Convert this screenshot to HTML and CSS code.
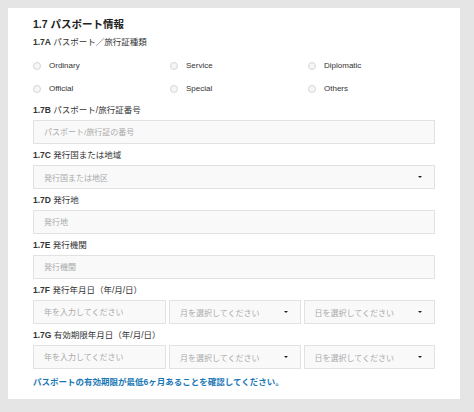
FILE: index.html
```html
<!DOCTYPE html>
<html lang="ja">
<head>
<meta charset="utf-8">
<title>1.7 パスポート情報</title>
<link rel="stylesheet" href="styles.css">
</head>
<body>
<section class="card">
  <h2 class="title">1.7 パスポート情報</h2>
  <div class="label"><b>1.7A</b> パスポート／旅行証種類</div>
  <div class="radios">
    <label class="radio"><span class="dot"></span>Ordinary</label>
    <label class="radio"><span class="dot"></span>Service</label>
    <label class="radio"><span class="dot"></span>Diplomatic</label>
    <label class="radio"><span class="dot"></span>Official</label>
    <label class="radio"><span class="dot"></span>Special</label>
    <label class="radio"><span class="dot"></span>Others</label>
  </div>

  <div class="group first">
    <div class="label"><b>1.7B</b> パスポート/旅行証番号</div>
    <input class="control" type="text" placeholder="パスポート/旅行証の番号">
  </div>

  <div class="group">
    <div class="label"><b>1.7C</b> 発行国または地域</div>
    <div class="control select"><span>発行国または地区</span><span class="caret"></span></div>
  </div>

  <div class="group">
    <div class="label"><b>1.7D</b> 発行地</div>
    <input class="control" type="text" placeholder="発行地">
  </div>

  <div class="group">
    <div class="label"><b>1.7E</b> 発行機関</div>
    <input class="control" type="text" placeholder="発行機関">
  </div>

  <div class="group">
    <div class="label"><b>1.7F</b> 発行年月日（年/月/日）</div>
    <div class="date-row">
      <input class="control" type="text" placeholder="年を入力してください">
      <div class="control select"><span>月を選択してください</span><span class="caret"></span></div>
      <div class="control select"><span>日を選択してください</span><span class="caret"></span></div>
    </div>
  </div>

  <div class="group last">
    <div class="label"><b>1.7G</b> 有効期限年月日（年/月/日）</div>
    <div class="date-row">
      <input class="control" type="text" placeholder="年を入力してください">
      <div class="control select"><span>月を選択してください</span><span class="caret"></span></div>
      <div class="control select"><span>日を選択してください</span><span class="caret"></span></div>
    </div>
  </div>

  <p class="note">パスポートの有効期限が最低6ヶ月あることを確認してください。</p>
</section>
</body>
</html>
```

FILE: styles.css
```css
html, body {
  margin: 0;
  padding: 0;
  background: #e5e5e5;
}
body {
  padding: 8px;
  font-family: "Liberation Sans", "Noto Sans CJK JP", sans-serif;
  color: #333;
}
.card {
  width: 452px;
  box-sizing: border-box;
  background: #fff;
  padding: 8px 25px 10px 25px;
}
.title {
  margin: 0;
  font-size: 10.5px;
  line-height: 16px;
  font-weight: bold;
  color: #222;
}
.label {
  font-size: 8.5px;
  line-height: 14px;
  margin-top: 3px;
  color: #333;
}
.label b {
  font-weight: bold;
}
.radios {
  display: grid;
  grid-template-columns: 137px 138px 1fr;
  margin-top: 5px;
}
.radio {
  display: flex;
  align-items: center;
  height: 23px;
  font-size: 8px;
  color: #333;
}
.dot {
  width: 8px;
  height: 8px;
  border: 1px solid #d6d6d6;
  border-radius: 50%;
  background: #f6f6f6;
  margin-right: 8px;
  box-sizing: border-box;
}
.group {
  margin-bottom: 4px;
}
.group.first {
  margin-top: 3px;
}
.group.last {
  margin-top: 2px;
}
.group .label {
  margin-top: 0;
  margin-bottom: 3px;
}
.control {
  display: flex;
  align-items: center;
  width: 100%;
  height: 24px;
  box-sizing: border-box;
  border: 1px solid #e2e2e2;
  background: #f9f9f9;
  padding: 0 12px 0 10px;
  font-family: "Liberation Sans", "Noto Sans CJK JP", sans-serif;
  font-size: 8px;
  color: #aaa;
  margin: 0;
  outline: none;
}
.control::placeholder {
  color: #aaa;
}
.select {
  justify-content: space-between;
}
.caret {
  width: 0;
  height: 0;
  border-left: 2px solid transparent;
  border-right: 2px solid transparent;
  border-top: 2.5px solid #222;
}
.date-row {
  display: grid;
  grid-template-columns: 133px 1fr 1fr;
  gap: 3px;
}
.note {
  margin: 6px 0 0 0;
  font-size: 8.5px;
  line-height: 14px;
  font-weight: bold;
  color: #1b78b6;
}
```
